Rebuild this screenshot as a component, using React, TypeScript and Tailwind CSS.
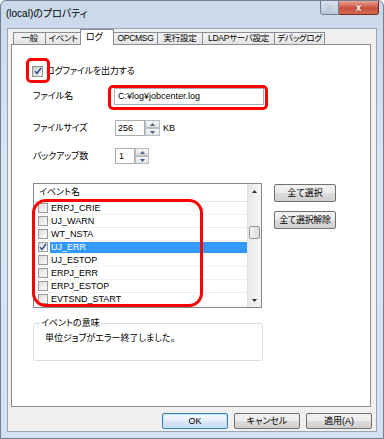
import React from "react";

const FONT =
  "[font-family:'Liberation_Sans','Noto_Sans_CJK_JP',sans-serif] [font-feature-settings:'palt']";

function Check({ checked, size = 11 }: { checked?: boolean; size?: number }) {
  const cls =
    size === 11
      ? "w-[11px] h-[11px] border border-[#8e8f8f] bg-[linear-gradient(135deg,#cfcfcf,#f4f4f4)]"
      : "w-[10px] h-[10px] border border-[#9a9a9a] bg-[linear-gradient(135deg,#dcdcdc,#fbfbfb)]";
  return (
    <div className={`${cls} flex items-center justify-center shrink-0`}>
      {checked && (
        <svg width="8" height="8" viewBox="0 0 8 8">
          <path d="M1 4.2 L3 6.4 L7 1" stroke="#2b4a8c" strokeWidth="1.5" fill="none" />
        </svg>
      )}
    </div>
  );
}

function Spinner({ w }: { w: string }) {
  return (
    <div className={`${w} h-full flex flex-col`}>
      {[0, 1].map((i) => (
        <div
          key={i}
          className="flex-1 border border-[#b9bcc2] bg-[linear-gradient(#f6f6f6,#dfe2e6)] flex items-center justify-center"
        >
          <svg width="5" height="3" viewBox="0 0 5 3">
            {i === 0 ? (
              <path d="M0 3 L2.5 0 L5 3 Z" fill="#4a5f86" />
            ) : (
              <path d="M0 0 L2.5 3 L5 0 Z" fill="#4a5f86" />
            )}
          </svg>
        </div>
      ))}
    </div>
  );
}

const tabs = [
  { label: "一般", cls: "w-[32px] border-l" },
  { label: "イベント", cls: "w-[35px] border-l" },
  { label: "ログ", cls: "w-[34px]", sel: true },
  { label: "OPCMSG", cls: "w-[43px]" },
  { label: "実行設定", cls: "w-[45px] border-l" },
  { label: "LDAPサーバ設定", cls: "w-[72px] border-l" },
  { label: "デバッグログ", cls: "w-[51px] border-l border-r" },
];

const events = [
  { name: "ERPJ_CRIE" },
  { name: "UJ_WARN" },
  { name: "WT_NSTA" },
  { name: "UJ_ERR", checked: true, sel: true },
  { name: "UJ_ESTOP" },
  { name: "ERPJ_ERR" },
  { name: "ERPJ_ESTOP" },
  { name: "EVTSND_START" },
];

function WinButton({ label, cls }: { label: string; cls: string }) {
  return (
    <div
      className={`${cls} rounded-[2px] border flex items-center justify-center text-[9px] leading-none text-black whitespace-nowrap`}
    >
      {label}
    </div>
  );
}

export default function App() {
  return (
    <div
      className={`${FONT} w-[384px] h-[439px] flex flex-col rounded-t-[6px] border border-[#6f7f93] bg-[linear-gradient(180deg,#c9d9ea_0%,#dbe6f2_40%,#d4e1ef_100%)] overflow-hidden`}
    >
      {/* title bar */}
      <div className="h-[27px] flex items-start justify-between shrink-0">
        <div className="pl-[5px] pt-[6px] text-[10px] leading-[13px] text-black">
          (local)のプロパティ
        </div>
        <div className="flex mr-[4px] -mt-px">
          <div className="w-[19px] h-[15px] rounded-bl-[3px] border border-[#6f7f93] bg-[linear-gradient(#d6e1ee,#b9c9dc)] flex items-center justify-center text-[9px] font-bold text-white [text-shadow:0_0_1px_#334]">
            ?
          </div>
          <div className="w-[40px] h-[15px] rounded-br-[3px] border border-l-0 border-[#7a2d22] bg-[linear-gradient(#e8a392,#c8503c_55%,#d46a50)] flex items-center justify-center text-[10px] font-bold text-white [text-shadow:0_0_1px_#400]">
            x
          </div>
        </div>
      </div>

      {/* client */}
      <div className="mx-[6px] h-[404px] bg-[#f0f0f0] border border-[#98a5b5] flex flex-col shrink-0">
        {/* tabs */}
        <div className="h-[15px] flex items-end pl-[5px] shrink-0">
          {tabs.map((t) =>
            t.sel ? (
              <div
                key={t.label}
                className={`${t.cls} h-[16px] -mb-px relative z-10 bg-white border-t border-l border-r border-[#898c95] flex items-start pt-[2px] pl-[5px] text-[9px] leading-[11px] text-black whitespace-nowrap`}
              >
                {t.label}
              </div>
            ) : (
              <div
                key={t.label}
                className={`${t.cls} h-[12px] border-t border-[#898c95] bg-[linear-gradient(#f4f4f4,#e3e3e3)] flex items-center justify-center text-[8.5px] tracking-[-0.3px] leading-none text-black whitespace-nowrap overflow-hidden`}
              >
                {t.label}
              </div>
            )
          )}
        </div>

        {/* panel */}
        <div className="relative ml-[3px] w-[360px] h-[363px] border border-[#898c95] bg-white flex flex-col pl-[21px] pt-[20px] text-[9px] text-black shrink-0">
          {/* row: checkbox */}
          <div className="flex items-center h-[12px] -ml-px">
            <Check checked />
            <span className="ml-[3px] leading-none tracking-[-0.2px]">ログファイルを出力する</span>
          </div>

          {/* file name */}
          <div className="mt-[11px] flex items-center h-[17px]">
            <span className="w-[81px] leading-none">ファイル名</span>
            <div className="w-[150px] h-[17px] border border-[#abadb3] flex items-center px-[3px] leading-none">
              C:¥log¥jobcenter.log
            </div>
          </div>

          {/* file size */}
          <div className="mt-[15px] flex items-center h-[16px]">
            <span className="w-[82px] leading-none tracking-[-0.2px]">ファイルサイズ</span>
            <div className="w-[30px] h-[16px] border border-[#abadb3] flex items-center px-[2px] leading-none">
              256
            </div>
            <Spinner w="w-[15px]" />
            <span className="ml-[3px] leading-none">KB</span>
          </div>

          {/* backup */}
          <div className="mt-[12px] flex items-center h-[16px]">
            <span className="w-[82px] leading-none tracking-[-0.2px]">バックアップ数</span>
            <div className="w-[20px] h-[16px] border border-[#abadb3] flex items-center px-[3px] leading-none">
              1
            </div>
            <Spinner w="w-[14px]" />
          </div>

          {/* list + buttons */}
          <div className="mt-[19px] flex items-start">
            <div className="w-[229px] h-[125px] border border-[#828790] bg-white flex overflow-hidden">
              <div className="w-[213px] flex flex-col overflow-hidden">
                <div className="h-[18px] shrink-0 border-b border-[#e5e5e5] flex items-center pl-[5px] leading-none">
                  イベント名
                </div>
                {events.map((e) => (
                  <div
                    key={e.name}
                    className="h-[13px] shrink-0 border-b border-[#f2f2f2] flex items-center pl-[4px]"
                  >
                    <Check size={10} checked={e.checked} />
                    <div
                      className={
                        e.sel
                          ? "ml-[2px] flex-1 h-[11px] bg-[#3399ff] text-white flex items-center pl-[1px] leading-none"
                          : "ml-[2px] flex-1 h-[11px] flex items-center pl-[1px] leading-none"
                      }
                    >
                      {e.name}
                    </div>
                  </div>
                ))}
              </div>
              {/* scrollbar */}
              <div className="w-[14px] flex flex-col bg-[linear-gradient(90deg,#e8e8e8,#f5f5f5)] border-l border-[#e0e0e0]">
                <div className="h-[14px] flex items-center justify-center">
                  <svg width="5" height="3" viewBox="0 0 5 3">
                    <path d="M0 3 L2.5 0 L5 3 Z" fill="#333" />
                  </svg>
                </div>
                <div className="h-[28px]" />
                <div className="h-[13px] mx-[1px] rounded-[2px] border border-[#979797] bg-[linear-gradient(90deg,#f3f3f3,#dcdcdc)]" />
                <div className="flex-1" />
                <div className="h-[14px] flex items-center justify-center">
                  <svg width="5" height="3" viewBox="0 0 5 3">
                    <path d="M0 0 L2.5 3 L5 0 Z" fill="#333" />
                  </svg>
                </div>
              </div>
            </div>
            <div className="ml-[12px] mt-px flex flex-col gap-[9px]">
              <WinButton
                label="全て選択"
                cls="w-[62px] h-[18px] border-[#707070] bg-[linear-gradient(#f2f2f2_0%,#ebebeb_50%,#dddddd_51%,#cfcfcf_100%)]"
              />
              <WinButton
                label="全て選択解除"
                cls="w-[62px] h-[18px] border-[#707070] bg-[linear-gradient(#f2f2f2_0%,#ebebeb_50%,#dddddd_51%,#cfcfcf_100%)] tracking-[-0.3px]"
              />
            </div>
          </div>

          {/* meaning group */}
          <fieldset className="mt-[10px] w-[230px] h-[43px] border border-[#d5dfe5] rounded-[3px] p-0">
            <legend className="ml-[6px] px-px leading-[11px]">イベントの意味</legend>
            <div className="leading-none mt-[5px] ml-[11px]">単位ジョブがエラー終了しました。</div>
          </fieldset>

          {/* red annotations */}
          <div className="absolute left-[14px] top-[13px] w-[24px] h-[25px] border-[3px] border-[#ff0000] rounded-[5px]" />
          <div className="absolute left-[96px] top-[40px] w-[160px] h-[25px] border-[3px] border-[#ff0000] rounded-[5px]" />
          <div className="absolute left-[20px] top-[154px] w-[171px] h-[108px] border-[3px] border-[#ff0000] rounded-[14px]" />
        </div>

        {/* bottom buttons */}
        <div className="mt-[6px] flex justify-end gap-[6px] pr-[4px]">
          <WinButton
            label="OK"
            cls="w-[66px] h-[16px] border-[#3c7fb1] bg-[linear-gradient(#f4f9fd_0%,#e6f0f8_50%,#d6e6f3_51%,#c9dff0_100%)] shadow-[inset_0_0_0_1px_#bfe3f8]"
          />
          <WinButton
            label="キャンセル"
            cls="w-[66px] h-[16px] border-[#707070] bg-[linear-gradient(#f2f2f2_0%,#ebebeb_50%,#dddddd_51%,#cfcfcf_100%)]"
          />
          <WinButton
            label="適用(A)"
            cls="w-[66px] h-[16px] border-[#707070] bg-[linear-gradient(#f2f2f2_0%,#ebebeb_50%,#dddddd_51%,#cfcfcf_100%)]"
          />
        </div>
      </div>
    </div>
  );
}
